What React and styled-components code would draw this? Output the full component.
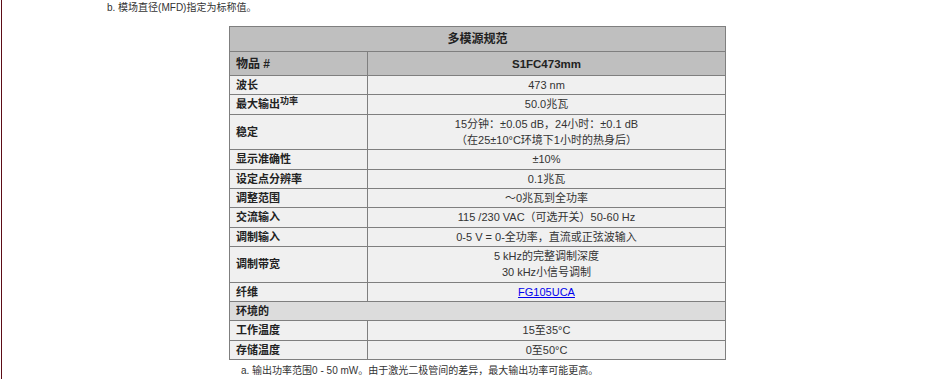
import React from "react"
import styled, { createGlobalStyle } from "styled-components"

const GlobalStyle = createGlobalStyle`
    html, body {
        margin: 0;
        padding: 0;
        background: #ffffff;
    }
    body {
        font-family: "Liberation Sans", "Noto Sans CJK SC", sans-serif;
        color: #333333;
    }
`

const Page = styled.div`
    margin-left: 1px;
    border-left: 1px solid #5c0c16;
    min-height: 379px;
    box-sizing: border-box;
    display: flex;
    flex-direction: column;
`

const TopNote = styled.p`
    margin: 0;
    padding: 1px 0 0 105px;
    font-size: 10px;
    line-height: 13px;
`

const Section = styled.div`
    width: 497px;
    margin: 12px auto 0;
    padding-left: 2px;
`

const SpecTable = styled.table`
    width: 100%;
    border-collapse: collapse;
    border: 1px solid #7f7f7f;
    font-size: 11px;
`

const TitleCell = styled.th`
    background: #bfbfbf;
    border: 1px solid #7f7f7f;
    height: 24px;
    padding: 0;
    font-size: 12px;
    line-height: 16px;
    font-weight: bold;
    color: #222222;
    text-align: center;
`

const HeadCell = styled.th`
    background: #bfbfbf;
    border: 1px solid #7f7f7f;
    height: 23px;
    padding: 0 6px;
    font-size: ${p => (p.$label ? "12px" : "11.5px")};
    line-height: 16px;
    font-weight: bold;
    color: #222222;
    text-align: ${p => (p.$label ? "left" : "center")};
    width: ${p => (p.$label ? "125px" : "auto")};
`

const Label = styled.td`
    background: ${p => (p.$group ? "#dcdcdc" : "#f0f0f0")};
    border: 1px solid #7f7f7f;
    padding: 1px 6px 1.4px;
    font-weight: bold;
    color: #222222;
    text-align: left;
    line-height: 16px;

    sup {
        font-size: 9px;
        line-height: 0;
        vertical-align: 4px;
    }
`

const Value = styled.td`
    background: #f0f0f0;
    border: 1px solid #7f7f7f;
    padding: 1px 6px 1.4px;
    text-align: center;
    line-height: 16px;

    a {
        color: #0000ee;
        text-decoration: underline;
    }
`

const FootNote = styled.p`
    margin: 0;
    padding: 4px 0 0 12px;
    font-size: 10px;
    line-height: 13px;
`

const rows = [
    { label: "波长", value: ["473 nm"] },
    { label: "最大输出", sup: "功率", value: ["50.0兆瓦"] },
    { label: "稳定", value: ["15分钟：±0.05 dB，24小时：±0.1 dB", "（在25±10°C环境下1小时的热身后）"] },
    { label: "显示准确性", value: ["±10%"] },
    { label: "设定点分辨率", value: ["0.1兆瓦"] },
    { label: "调整范围", value: ["～0兆瓦到全功率"] },
    { label: "交流输入", value: ["115 /230 VAC（可选开关）50-60 Hz"] },
    { label: "调制输入", value: ["0-5 V = 0-全功率，直流或正弦波输入"] },
    { label: "调制带宽", value: ["5 kHz的完整调制深度", "30 kHz小信号调制"] },
    { label: "纤维", link: "FG105UCA" },
    { label: "环境的", group: true },
    { label: "工作温度", value: ["15至35°C"] },
    { label: "存储温度", value: ["0至50°C"] },
]

const App = () => (
    <>
        <GlobalStyle />
        <Page>
            <TopNote>b. 模场直径(MFD)指定为标称值。</TopNote>
            <Section>
                <SpecTable>
                    <thead>
                        <tr>
                            <TitleCell colSpan={2}>多模源规范</TitleCell>
                        </tr>
                        <tr>
                            <HeadCell $label>物品 #</HeadCell>
                            <HeadCell>S1FC473mm</HeadCell>
                        </tr>
                    </thead>
                    <tbody>
                        {rows.map(r =>
                            r.group ? (
                                <tr key={r.label}>
                                    <Label colSpan={2} $group>{r.label}</Label>
                                </tr>
                            ) : (
                                <tr key={r.label}>
                                    <Label>
                                        {r.label}
                                        {r.sup && <sup>{r.sup}</sup>}
                                    </Label>
                                    <Value>
                                        {r.link ? (
                                            <a href="#">{r.link}</a>
                                        ) : (
                                            r.value.map((v, i) => (
                                                <React.Fragment key={i}>
                                                    {i > 0 && <br />}
                                                    {v}
                                                </React.Fragment>
                                            ))
                                        )}
                                    </Value>
                                </tr>
                            )
                        )}
                    </tbody>
                </SpecTable>
                <FootNote>a. 输出功率范围0 - 50 mW。由于激光二极管间的差异，最大输出功率可能更高。</FootNote>
            </Section>
        </Page>
    </>
)

export default App
